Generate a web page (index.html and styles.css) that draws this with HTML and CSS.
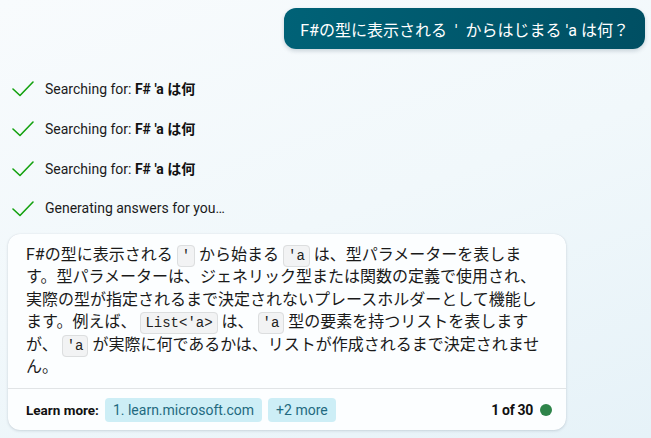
FILE: index.html
```html
<!DOCTYPE html>
<html lang="ja">
<head>
<meta charset="utf-8">
<link rel="stylesheet" href="styles.css">
</head>
<body>
<main class="chat">
  <div class="user-bubble">F#の型に表示される  '  からはじまる 'a は何？</div>

  <ul class="status-list">
    <li class="status-row">
      <svg class="check" width="22" height="17" viewBox="0 0 22 17"><polyline points="1,9 8,15.5 21,2" fill="none" stroke="#13a10e" stroke-width="1.6" stroke-linecap="round" stroke-linejoin="round"/></svg>
      <span>Searching for: <b>F# 'a は何</b></span>
    </li>
    <li class="status-row">
      <svg class="check" width="22" height="17" viewBox="0 0 22 17"><polyline points="1,9 8,15.5 21,2" fill="none" stroke="#13a10e" stroke-width="1.6" stroke-linecap="round" stroke-linejoin="round"/></svg>
      <span>Searching for: <b>F# 'a は何</b></span>
    </li>
    <li class="status-row">
      <svg class="check" width="22" height="17" viewBox="0 0 22 17"><polyline points="1,9 8,15.5 21,2" fill="none" stroke="#13a10e" stroke-width="1.6" stroke-linecap="round" stroke-linejoin="round"/></svg>
      <span>Searching for: <b>F# 'a は何</b></span>
    </li>
    <li class="status-row">
      <svg class="check" width="22" height="17" viewBox="0 0 22 17"><polyline points="1,9 8,15.5 21,2" fill="none" stroke="#13a10e" stroke-width="1.6" stroke-linecap="round" stroke-linejoin="round"/></svg>
      <span>Generating answers for you…</span>
    </li>
  </ul>

  <section class="answer-card">
    <p class="answer-text">F#の型に表示される <code>'</code> から始まる <code>'a</code> は、型パラメーターを表します。型パラメーターは、ジェネリック型または関数の定義で使用され、実際の型が指定されるまで決定されないプレースホルダーとして機能します。例えば、 <code>List&lt;'a&gt;</code> は、 <code>'a</code> 型の要素を持つリストを表しますが、 <code>'a</code> が実際に何であるかは、リストが作成されるまで決定されません。</p>
    <footer class="card-footer">
      <span class="learn-label">Learn more:</span>
      <span class="chip">1. learn.microsoft.com</span>
      <span class="chip">+2 more</span>
      <span class="counter">1 of 30</span>
      <span class="dot"></span>
    </footer>
  </section>
</main>
</body>
</html>
```

FILE: styles.css
```css
* { box-sizing: border-box; }

html, body {
  margin: 0;
  height: 100%;
}

body {
  background: linear-gradient(160deg, #f8fbfd 0%, #f1f8fb 50%, #e6f2f8 100%);
  font-family: Roboto, "Noto Sans CJK JP", sans-serif;
  color: #111;
  overflow: hidden;
}

.chat {
  display: flex;
  flex-direction: column;
  padding: 8px 6px 0 8px;
}

.user-bubble {
  align-self: flex-end;
  height: 41px;
  padding: 0 16px;
  display: flex;
  align-items: center;
  border-radius: 12px;
  background: linear-gradient(100deg, #006277 0%, #004f63 100%);
  color: #fff;
  font-size: 16px;
  box-shadow: 0 2px 4px rgba(0, 40, 60, 0.18);
  white-space: pre;
}

.status-list {
  list-style: none;
  margin: 19px 0 0 0;
  padding: 0;
}

.status-row {
  height: 40px;
  display: flex;
  align-items: center;
  gap: 11px;
  padding-left: 4px;
  font-size: 14px;
  color: #1b1b1b;
}

.status-row b { font-weight: 700; color: #111; }

.check { display: block; flex: none; }

.answer-card {
  margin-top: 6px;
  width: 558px;
  background: #fcfeff;
  border-radius: 12px;
  box-shadow: 0 1px 3px rgba(0, 30, 60, 0.14), 0 0 1px rgba(0, 30, 60, 0.12);
}

.answer-text {
  margin: 0;
  padding: 10px 18px 10px 18px;
  font-family: Roboto, "Noto Sans CJK JP", sans-serif;
  font-size: 16px;
  line-height: 22.4px;
  color: #1a1a1a;
}

.answer-text code {
  font-family: "Liberation Mono", "DejaVu Sans Mono", monospace;
  font-size: 14px;
  line-height: 1;
  padding: 2px 4px;
  background: #f2f3f4;
  border: 1px solid #dcdedf;
  border-radius: 4px;
  color: #222;
}

.card-footer {
  height: 42px;
  border-top: 1px solid #e1e4e6;
  display: flex;
  align-items: center;
  padding: 0 14px 0 18px;
  font-size: 14px;
}

.learn-label {
  font-weight: 700;
  font-size: 13.5px;
  margin-right: 6px;
  color: #111;
}

.chip {
  height: 24px;
  display: flex;
  align-items: center;
  padding: 0 8px;
  margin-right: 6px;
  border-radius: 4px;
  background: #cdeef6;
  color: #1f6a80;
  font-size: 14px;
}

.counter {
  margin-left: auto;
  font-weight: 700;
  font-size: 14px;
  color: #111;
  letter-spacing: -0.3px;
}

.dot {
  width: 12px;
  height: 12px;
  margin-left: 7px;
  border-radius: 50%;
  background: #2e844a;
}
```
